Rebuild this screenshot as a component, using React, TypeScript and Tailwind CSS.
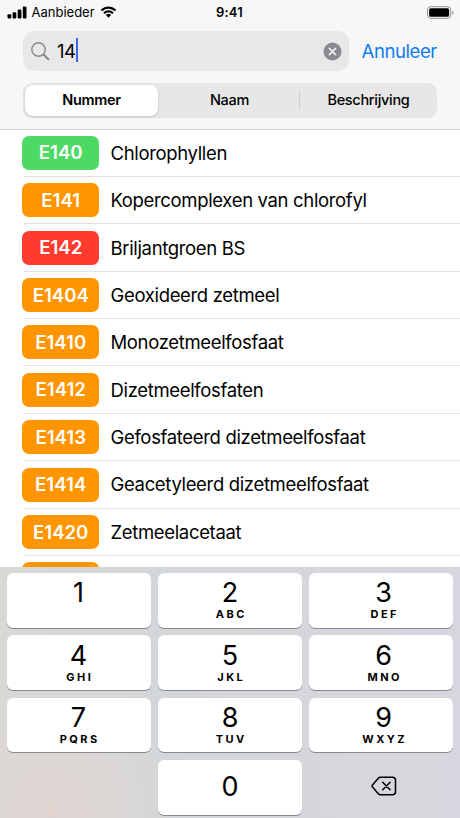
import type React from "react"

type Level = "safe" | "caution" | "danger"

const additives: { code: string; name: string; level: Level }[] = [
  { code: "E140", name: "Chlorophyllen", level: "safe" },
  { code: "E141", name: "Kopercomplexen van chlorofyl", level: "caution" },
  { code: "E142", name: "Briljantgroen BS", level: "danger" },
  { code: "E1404", name: "Geoxideerd zetmeel", level: "caution" },
  { code: "E1410", name: "Monozetmeelfosfaat", level: "caution" },
  { code: "E1412", name: "Dizetmeelfosfaten", level: "caution" },
  { code: "E1413", name: "Gefosfateerd dizetmeelfosfaat", level: "caution" },
  { code: "E1414", name: "Geacetyleerd dizetmeelfosfaat", level: "caution" },
  { code: "E1420", name: "Zetmeelacetaat", level: "caution" },
  { code: "", name: "", level: "caution" },
]

const levelColors: Record<Level, string> = {
  safe: "bg-[#4cd964]",
  caution: "bg-[#ff9500]",
  danger: "bg-[#ff3b30]",
}

const keys = [
  { digit: "1", letters: "" },
  { digit: "2", letters: "ABC" },
  { digit: "3", letters: "DEF" },
  { digit: "4", letters: "GHI" },
  { digit: "5", letters: "JKL" },
  { digit: "6", letters: "MNO" },
  { digit: "7", letters: "PQRS" },
  { digit: "8", letters: "TUV" },
  { digit: "9", letters: "WXYZ" },
]

// labels sit slightly outward in the outer columns
const columnNudge = ["pr-[1px]", "", "pl-[5px]"]

const StatusBar: React.FC = () => (
  <div className="grid h-6 grid-cols-3 items-center pl-[7px] pr-[6px] text-[13px] leading-6">
    <div className="flex items-center">
      <svg className="h-[13px] w-5" viewBox="0 0 20 13">
        <rect x="0.5" y="8.2" width="3.7" height="4.3" rx="1.1" />
        <rect x="5.6" y="6.2" width="3.7" height="6.3" rx="1.1" />
        <rect x="10.7" y="3.6" width="3.7" height="8.9" rx="1.1" />
        <rect x="15.8" y="0.6" width="3.7" height="11.9" rx="1.1" />
      </svg>
      <span className="ml-[4.5px]">Aanbieder</span>
      <svg className="ml-[5px] h-[13px] w-[17px]" viewBox="0 0 17 13">
        <path d="M8.5 2.7c2.3 0 4.4.9 6 2.4.1.1.3.1.4 0l1.2-1.2c.1-.1.1-.3 0-.4a11 11 0 0 0-15.2 0c-.1.1-.1.3 0 .4l1.2 1.2c.1.1.3.1.4 0a8.7 8.7 0 0 1 6-2.4z" />
        <path d="M8.5 6.6c1.3 0 2.5.5 3.4 1.3.1.1.3.1.4 0l1.2-1.2c.1-.1.1-.3 0-.4a7.3 7.3 0 0 0-10 0c-.1.1-.1.3 0 .4l1.2 1.2c.1.1.3.1.4 0 .9-.8 2.1-1.3 3.4-1.3z" />
        <path d="M10.9 9.2c.1-.1.1-.3 0-.4a3.7 3.7 0 0 0-4.8 0c-.1.1-.1.3 0 .4l2.2 2.2c.1.1.3.1.4 0z" />
      </svg>
    </div>
    <div className="pr-[2px] text-center font-semibold tracking-[0.2px]">9:41</div>
    <svg className="h-[13px] w-[27px] justify-self-end" viewBox="0 0 27 13">
      <rect x="0.5" y="0.7" width="23.2" height="11.6" rx="3.2" fill="none" stroke="#8f8f8f" />
      <rect x="2.1" y="2.2" width="20" height="8.6" rx="1.9" />
      <path d="M25.1 4.5v4c.8-.3 1.4-1.1 1.4-2s-.6-1.7-1.4-2z" fill="#999" />
    </svg>
  </div>
)

const SearchBar: React.FC = () => (
  <div className="mt-[7.4px] flex items-center px-[23px]">
    <div className="flex h-10 w-[325.5px] shrink-0 items-center rounded-[11px] bg-[#e8e8ea] pl-2 pr-[7px]">
      <svg className="h-[19px] w-[19px]" viewBox="0 0 19 19" fill="none" stroke="#88888c" strokeLinecap="round">
        <circle cx="7.5" cy="7.5" r="6.7" strokeWidth="1.4" />
        <path d="M12.5 12.5l4.8 4.8" strokeWidth="2" />
      </svg>
      <span className="ml-[7px] text-[18.5px] tracking-[-0.4px]">14</span>
      <span className="mb-[2px] h-6 w-[2px] bg-[#3c66e5]" />
      <svg className="ml-auto h-[19px] w-[19px]" viewBox="0 0 19 19">
        <circle cx="9.5" cy="9.5" r="9" fill="#8a8a8e" />
        <path d="M6.4 6.4l6.2 6.2m0-6.2l-6.2 6.2" stroke="#f0f0f2" strokeWidth="1.7" strokeLinecap="round" />
      </svg>
    </div>
    <button className="ml-[13px] pt-[1.2px] text-[18.6px] tracking-[-0.45px] text-[#0f7df0]">Annuleer</button>
  </div>
)

const ScopeBar: React.FC = () => (
  <div className="mx-[23px] mt-[11.4px] grid h-[35px] grid-cols-[137px_139px_138px] items-center rounded-[9px] bg-[#e7e7e8] text-center text-[14.5px] tracking-[-0.3px]">
    <div className="mx-[2px] flex h-[31px] items-center justify-center rounded-lg bg-white font-semibold shadow-[0_1px_3px_rgba(0,0,0,0.16)]">
      Nummer
    </div>
    <div className="font-medium">Naam</div>
    <div className="flex h-5 items-center justify-center border-l border-[#cfcfd1] font-medium">Beschrijving</div>
  </div>
)

const Keypad: React.FC = () => (
  <div className="grid h-[251px] shrink-0 grid-cols-3 content-start gap-x-[7px] gap-y-[7.4px] bg-[#d5d7dc] bg-[radial-gradient(circle_at_11%_97%,#e0d3d0_0,#dbd7d5_60px,transparent_125px),linear-gradient(90deg,#d9d8d4_0,#d3d6d9_35%,#d6d7de_100%)] px-[7px] pt-[6px]">
    {keys.map((key, index) => (
      <button
        key={key.digit}
        className={`${columnNudge[index % 3]} flex h-[54.9px] flex-col items-center rounded-md bg-white pt-[5.4px] shadow-[0_1px_0_#898a8d]`}
      >
        <span className="text-[27px] leading-[29px]">{key.digit}</span>
        <span className="mt-[1px] pl-[2.5px] text-[11px] font-bold leading-[13px] tracking-[2.5px]">{key.letters}</span>
      </button>
    ))}
    <div />
    <button className="flex h-[54.9px] items-center justify-center rounded-md bg-white pb-[1px] text-[27px] shadow-[0_1px_0_#898a8d]">
      0
    </button>
    <button className="flex h-[54.9px] items-center justify-center pb-[3px] pl-[6px]">
      <svg className="h-5 w-[26px]" viewBox="0 0 26 20" fill="none" stroke="#000" strokeLinecap="round" strokeLinejoin="round">
        <path d="M9.3 1.3h12.2a3 3 0 0 1 3 3v11.4a3 3 0 0 1-3 3H9.3c-.7 0-1.3-.3-1.8-.8l-6-6.8c-.5-.6-.5-1.6 0-2.2l6-6.8c.5-.5 1.1-.8 1.8-.8z" strokeWidth="1.5" />
        <path d="M11.7 6.2l7.4 7.6m0-7.6l-7.4 7.6" strokeWidth="1.5" />
      </svg>
    </button>
  </div>
)

export default function App() {
  return (
    <div className="flex h-[818px] w-[460px] flex-col overflow-hidden bg-white font-['Inter',sans-serif] text-black">
      <header className="h-[130px] shrink-0 border-b border-[#cececf] bg-[#f7f7f7]">
        <StatusBar />
        <SearchBar />
        <ScopeBar />
      </header>

      <main className="h-[437px] shrink-0 overflow-hidden">
        <ul className="-mt-[0.6px] pl-[23px]">
          {additives.map((item) => (
            <li key={item.code} className="flex h-[47.4px] items-center border-b border-[#e4e4e6]">
              <span
                className={`${levelColors[item.level]} -ml-[0.6px] mt-[0.6px] flex h-[34px] w-[76.6px] shrink-0 items-center justify-center rounded-[7px] pt-[1px] text-[18.6px] font-semibold text-white`}
              >
                {item.code}
              </span>
              <span className="ml-[11.5px] whitespace-nowrap pt-[2px] text-[18.5px] tracking-[-0.34px]">{item.name}</span>
            </li>
          ))}
        </ul>
      </main>

      <Keypad />
    </div>
  )
}
